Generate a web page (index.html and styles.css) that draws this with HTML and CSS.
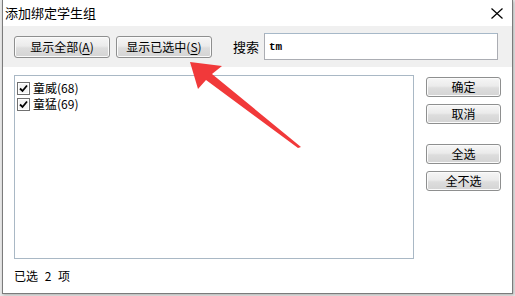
FILE: index.html
```html
<!DOCTYPE html>
<html lang="zh-CN">
<head>
    <meta charset="UTF-8">
    <title>添加绑定学生组</title>
    <link rel="stylesheet" href="styles.css">
</head>
<body>
    <div class="window">
        <div class="titlebar">
            <span class="title">添加绑定学生组</span>
            <span class="close">
                <svg width="12" height="11" viewBox="0 0 12 11"><path d="M0.5 0.5 L11.5 10.5 M11.5 0.5 L0.5 10.5" stroke="#000" stroke-width="1.2" fill="none"/></svg>
            </span>
        </div>
        <div class="toolbar">
            <button class="btn btn-wide">显示全部(<u>A</u>)</button>
            <button class="btn btn-wide">显示已选中(<u>S</u>)</button>
            <label class="search-label" for="search">搜索</label>
            <input class="search" id="search" type="text" value="tm">
        </div>
        <div class="main">
            <div class="listbox">
                <div class="item"><span class="check"><svg width="9" height="9" viewBox="0 0 9 9"><path d="M1 4.5 L3.5 7 L8 1.5" stroke="#000" stroke-width="1.8" fill="none"/></svg></span>童威(68)</div>
                <div class="item"><span class="check"><svg width="9" height="9" viewBox="0 0 9 9"><path d="M1 4.5 L3.5 7 L8 1.5" stroke="#000" stroke-width="1.8" fill="none"/></svg></span>童猛(69)</div>
            </div>
            <div class="side">
                <button class="btn btn-side">确定</button>
                <button class="btn btn-side">取消</button>
                <button class="btn btn-side gap">全选</button>
                <button class="btn btn-side">全不选</button>
            </div>
        </div>
        <div class="status">已选 2 项</div>
    </div>
    <svg class="arrow" width="515" height="296" viewBox="0 0 515 296">
        <polygon points="190,62 222,66 212,74 301,147 298,148 206,80 198,89" fill="#f1393a"/>
    </svg>
</body>
</html>
```

FILE: styles.css
```css
body {
    margin: 0;
    width: 515px;
    height: 296px;
    background: #e9e9e9;
    font-family: "Noto Sans CJK SC", sans-serif;
    font-size: 12px;
    color: #000;
    position: relative;
    overflow: hidden;
}
.window {
    margin-left: 2px;
    width: 509px;
    height: 293px;
    border: 1px solid #7b7b7b;
    border-top: none;
    background: #fff;
    box-shadow: 1px 1px 3px rgba(0, 0, 0, 0.25);
}
.titlebar {
    height: 26px;
    display: flex;
    align-items: center;
    justify-content: space-between;
    padding: 0 9px 0 2px;
}
.title {
    font-size: 13px;
    line-height: 16px;
}
.close {
    display: flex;
    margin-top: 1px;
}
.toolbar {
    height: 41px;
    background: #f0f0f0;
    display: flex;
    align-items: center;
    padding: 0 0 0 11px;
    box-sizing: border-box;
}
.btn {
    font-family: "Noto Sans CJK SC", sans-serif;
    font-size: 12px;
    line-height: 14px;
    padding: 0;
    border: 1px solid #8e8f8f;
    border-radius: 3px;
    background: linear-gradient(#f6f6f6 0%, #ebebeb 45%, #dddddd 55%, #d4d4d4 100%);
    box-shadow: inset 0 0 0 1px #fbfbfb;
    color: #000;
}
.btn u {
    text-decoration-thickness: 1px;
    text-underline-offset: 2px;
}
.btn-wide {
    width: 96px;
    height: 22px;
    margin-right: 6px;
}
.search-label {
    margin-left: 15px;
    font-size: 13px;
    width: 31px;
}
.search {
    width: 234px;
    height: 27px;
    box-sizing: border-box;
    border: 1px solid #abadb3;
    border-top-color: #a6b8c8;
    padding: 0 4px;
    font-family: "Liberation Mono", monospace;
    font-size: 11px;
    font-weight: bold;
    outline: none;
}
.main {
    display: flex;
    padding: 8px 0 0 11px;
}
.listbox {
    width: 396px;
    height: 178px;
    border: 1px solid #a9b8c5;
    padding: 4px 0 0 2px;
}
.item {
    display: flex;
    align-items: center;
    height: 16px;
    line-height: 16px;
    font-size: 12px;
}
.check {
    width: 11px;
    height: 11px;
    border: 1px solid #707070;
    box-shadow: inset 0 0 0 1px #fff;
    background: #f4f4f4;
    margin-right: 3px;
    display: flex;
    align-items: center;
    justify-content: center;
}
.side {
    display: flex;
    flex-direction: column;
    margin-left: 12px;
    padding-top: 2px;
}
.btn-side {
    width: 75px;
    height: 20px;
    margin-bottom: 7px;
}
.btn-side.gap {
    margin-top: 13px;
}
.status {
    padding: 9px 0 0 11px;
    font-size: 12px;
    line-height: 15px;
    word-spacing: 4px;
}
.arrow {
    position: absolute;
    left: 0;
    top: 0;
    pointer-events: none;
}
```
